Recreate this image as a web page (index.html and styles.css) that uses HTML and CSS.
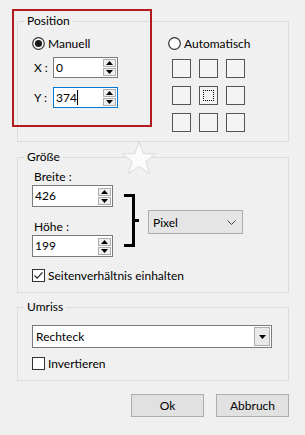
FILE: index.html
```html
<!DOCTYPE html>
<html lang="de">
	<head>
		<meta charset="UTF-8">
		<title>Position</title>
		<link rel="stylesheet" href="styles.css">
	</head>
	<body>
		<div class="dialog">

			<fieldset class="group group-position">
				<legend>Position</legend>
				<div class="pos-cols">
					<div class="pos-manual">
						<div class="radio-row">
							<svg class="radio" width="13" height="13" viewBox="0 0 13 13"><circle cx="6.5" cy="6.5" r="5.8" fill="#fff" stroke="#333" stroke-width="1.2"/><circle cx="6.5" cy="6.5" r="3.6" fill="#1a1a1a"/></svg>
							<span>Manuell</span>
						</div>
						<div class="field-row">
							<span class="axis">X :</span>
							<div class="spin spin-small">
								<span class="spin-text">0</span>
								<div class="spin-btns">
									<div class="spin-btn"><svg width="7" height="4" viewBox="0 0 7 4"><path d="M0 4 L3.5 0 L7 4 Z" fill="#000"/></svg></div>
									<div class="spin-btn"><svg width="7" height="4" viewBox="0 0 7 4"><path d="M0 0 L3.5 4 L7 0 Z" fill="#000"/></svg></div>
								</div>
							</div>
						</div>
						<div class="field-row field-row-y">
							<span class="axis">Y :</span>
							<div class="spin spin-small focused">
								<span class="spin-text">374<span class="caret"></span></span>
								<div class="spin-btns">
									<div class="spin-btn"><svg width="7" height="4" viewBox="0 0 7 4"><path d="M0 4 L3.5 0 L7 4 Z" fill="#000"/></svg></div>
									<div class="spin-btn"><svg width="7" height="4" viewBox="0 0 7 4"><path d="M0 0 L3.5 4 L7 0 Z" fill="#000"/></svg></div>
								</div>
							</div>
						</div>
					</div>

					<div class="pos-auto">
						<div class="radio-row">
							<svg class="radio" width="13" height="13" viewBox="0 0 13 13"><circle cx="6.5" cy="6.5" r="5.8" fill="#fff" stroke="#333" stroke-width="1.2"/></svg>
							<span>Automatisch</span>
						</div>
						<div class="anchor-grid">
							<div class="anchor"></div>
							<div class="anchor"></div>
							<div class="anchor"></div>
							<div class="anchor"></div>
							<div class="anchor active"><div class="anchor-focus"></div></div>
							<div class="anchor"></div>
							<div class="anchor"></div>
							<div class="anchor"></div>
							<div class="anchor"></div>
						</div>
					</div>
				</div>
			</fieldset>

			<fieldset class="group group-size">
				<legend>Größe</legend>
				<div class="size-row">
					<div class="size-fields">
						<div class="size-label">Breite :</div>
						<div class="spin spin-wide">
							<span class="spin-text">426</span>
							<div class="spin-btns">
								<div class="spin-btn"><svg width="7" height="4" viewBox="0 0 7 4"><path d="M0 4 L3.5 0 L7 4 Z" fill="#000"/></svg></div>
								<div class="spin-btn"><svg width="7" height="4" viewBox="0 0 7 4"><path d="M0 0 L3.5 4 L7 0 Z" fill="#000"/></svg></div>
							</div>
						</div>
						<div class="size-label size-label-h">Höhe :</div>
						<div class="spin spin-wide">
							<span class="spin-text">199</span>
							<div class="spin-btns">
								<div class="spin-btn"><svg width="7" height="4" viewBox="0 0 7 4"><path d="M0 4 L3.5 0 L7 4 Z" fill="#000"/></svg></div>
								<div class="spin-btn"><svg width="7" height="4" viewBox="0 0 7 4"><path d="M0 0 L3.5 4 L7 0 Z" fill="#000"/></svg></div>
							</div>
						</div>
					</div>
					<svg class="bracket" width="15" height="53" viewBox="0 0 15 53">
						<path d="M0 1.5 H9.5 V51.5 H0 M9.5 26.5 H15" fill="none" stroke="#000" stroke-width="3"/>
					</svg>
					<div class="unit-combo">
						<span>Pixel</span>
						<svg width="9" height="5" viewBox="0 0 9 5"><path d="M0.5 0.5 L4.5 4.5 L8.5 0.5" fill="none" stroke="#444" stroke-width="1"/></svg>
					</div>
				</div>
				<div class="check-row">
					<svg class="check" width="13" height="13" viewBox="0 0 13 13"><rect x="0.5" y="0.5" width="12" height="12" fill="#fff" stroke="#333"/><path d="M2.5 6.5 L5.2 9.2 L10.5 3.3" fill="none" stroke="#222" stroke-width="1.2"/></svg>
					<span>Seitenverhältnis einhalten</span>
				</div>
			</fieldset>

			<fieldset class="group group-outline">
				<legend>Umriss</legend>
				<div class="shape-combo">
					<span>Rechteck</span>
					<div class="drop-btn"><svg width="7" height="4" viewBox="0 0 7 4"><path d="M0 0 L3.5 4 L7 0 Z" fill="#000"/></svg></div>
				</div>
				<div class="check-row check-row-inv">
					<svg class="check" width="13" height="13" viewBox="0 0 13 13"><rect x="0.5" y="0.5" width="12" height="12" fill="#fff" stroke="#333"/></svg>
					<span>Invertieren</span>
				</div>
			</fieldset>

			<div class="buttons">
				<div class="btn">Ok</div>
				<div class="btn">Abbruch</div>
			</div>

			<!-- Markierung und Wasserzeichen liegen ueber dem Dialog -->
			<div class="highlight"></div>
			<svg class="watermark" width="36" height="34" viewBox="0 0 36 34">
				<path d="M18 1 L22.3 12.6 L34.6 12.9 L24.9 20.5 L28.4 32.3 L18 25.4 L7.6 32.3 L11.1 20.5 L1.4 12.9 L13.7 12.6 Z" fill="#fbfbfb" stroke="#dadada" stroke-width="1"/>
			</svg>

		</div>
	</body>
</html>
```

FILE: styles.css
```css
body {
	margin: 0;
	background: #f0f0f0;
	font-family: Lato, "Noto Sans", sans-serif;
	font-size: 12px;
	color: #000;
}

.dialog {
	position: relative;
	width: 305px;
	height: 435px;
	padding-top: 13px;
	box-sizing: border-box;
}

/* Gruppenrahmen */
.group {
	margin: 0 0 0 17px;
	width: 272px;
	box-sizing: border-box;
	border: 1px solid #dcdcdc;
	padding: 0 6px 9px 6px;
	min-width: 0;
}

.group legend {
	padding: 0 3px;
	line-height: 16px;
}

.group-position {
	padding-top: 6px;
}

.group-size {
	margin-top: 7px;
	padding-top: 4px;
}

.group-outline {
	margin-top: 6px;
	padding-top: 10px;
}

/* Position */
.pos-cols {
	display: flex;
}

.pos-manual {
	width: 136px;
	margin-left: 8px;
}

.radio-row {
	display: flex;
	align-items: center;
	height: 16px;
	gap: 3px;
}

.radio {
	display: block;
}

.field-row {
	display: flex;
	align-items: center;
	margin-top: 6px;
}

.field-row-y {
	margin-top: 9px;
}

.axis {
	width: 19px;
	padding-left: 2px;
}

.spin {
	display: flex;
	align-items: center;
	justify-content: space-between;
	box-sizing: border-box;
	background: #fff;
	border: 1px solid #7a7a7a;
}

.spin.focused {
	border-color: #0078d7;
}

.spin-small {
	width: 65px;
	height: 21px;
}

.spin-wide {
	width: 81px;
	height: 22px;
}

.spin-text {
	padding-left: 2px;
	line-height: 16px;
}

.caret {
	display: inline-block;
	width: 1px;
	height: 15px;
	background: #000;
	vertical-align: -3px;
}

.spin-btns {
	display: flex;
	flex-direction: column;
	gap: 1px;
	margin-right: 1px;
}

.spin-btn {
	display: flex;
	align-items: center;
	justify-content: center;
	width: 13px;
	height: 8px;
	box-sizing: border-box;
	border: 1px solid #adadad;
	background: #f0f0f0;
}

.spin-btn svg {
	display: block;
}

.anchor-grid {
	display: grid;
	grid-template-columns: repeat(3, 19px);
	grid-auto-rows: 19px;
	gap: 8px;
	margin: 8px 0 0 4px;
}

.anchor {
	box-sizing: border-box;
	border: 1px solid #555;
	background: #f4f4f4;
	padding: 3px;
}

.anchor-focus {
	height: 100%;
	box-sizing: border-box;
	border: 1px dotted #000;
}

/* Groesse */
.size-row {
	display: flex;
	align-items: flex-start;
}

.size-fields {
	margin-left: 8px;
}

.size-label {
	line-height: 16px;
	padding-left: 2px;
}

.size-label-h {
	margin-top: 12px;
}

.bracket {
	display: block;
	margin: 25px 0 0 11px;
}

.unit-combo {
	display: flex;
	align-items: center;
	justify-content: space-between;
	box-sizing: border-box;
	width: 95px;
	height: 24px;
	margin: 41px 0 0 9px;
	padding: 0 6px 0 4px;
	background: #e5e5e5;
	border: 1px solid #acacac;
}

.check-row {
	display: flex;
	align-items: center;
	gap: 3px;
	height: 16px;
	margin: 10px 0 0 8px;
}

.check {
	display: block;
}

/* Umriss */
.shape-combo {
	display: flex;
	align-items: center;
	justify-content: space-between;
	box-sizing: border-box;
	width: 240px;
	height: 23px;
	margin-left: 8px;
	padding-left: 3px;
	background: #fff;
	border: 1px solid #7a7a7a;
}

.drop-btn {
	display: flex;
	align-items: center;
	justify-content: center;
	box-sizing: border-box;
	width: 16px;
	height: 19px;
	margin-right: 1px;
	background: #e9e9e9;
	border: 1px solid #adadad;
}

.check-row-inv {
	margin-top: 7px;
}

/* Schaltflaechen */
.buttons {
	display: flex;
	justify-content: flex-end;
	gap: 12px;
	margin-top: 13px;
	padding-right: 16px;
}

.btn {
	width: 73px;
	height: 23px;
	box-sizing: border-box;
	line-height: 21px;
	text-align: center;
	background: #e1e1e1;
	border: 1px solid #adadad;
}

/* Overlays */
.highlight {
	position: absolute;
	left: 12px;
	top: 9px;
	width: 140px;
	height: 118px;
	box-sizing: border-box;
	border: 2px solid #b31b1f;
}

.watermark {
	position: absolute;
	left: 121px;
	top: 141px;
}
```
